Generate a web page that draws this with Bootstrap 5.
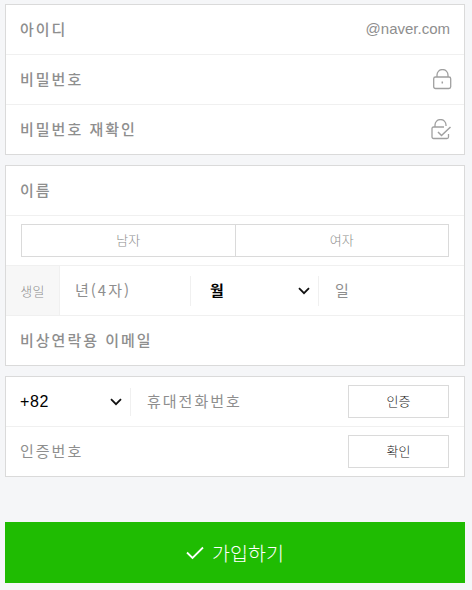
<!DOCTYPE html>
<html lang="ko">
<head>
<meta charset="utf-8">
<title>가입</title>
<link rel="stylesheet" href="https://cdn.jsdelivr.net/npm/bootstrap@5.3.0/dist/css/bootstrap.min.css">
<style>
body{background:#f5f6f8;font-family:"Noto Sans CJK KR","Noto Sans",sans-serif;color:#999;padding:4px 7px 0 5px;height:590px;overflow:hidden}
.boxy{border:1px solid #dadada;border-radius:0;background:#fff;margin-bottom:10px}
.rowy{height:50px;border-bottom:1px solid #f0f0f0;padding:0 14px;font-size:15px;font-weight:500;letter-spacing:2px;color:#8e8e8e}
.rowy:last-child{border-bottom:0;height:49px}
.ico{margin-right:-2px}
.suffix{font-family:"Liberation Sans",sans-serif;font-weight:400;font-size:15px;letter-spacing:0;color:#8e8e8e}
.genderwrap{padding:8px 15px 0 15px;height:50px;border-bottom:1px solid #f0f0f0}
.seg{flex:1 1 0;height:33px;border:1px solid #dadada;font-size:13px;color:#8e8e8e;font-weight:300;padding-bottom:2px}
.seg+.seg{border-left:0}
.birthrow{height:50px;border-bottom:1px solid #f0f0f0}
.birthlabel{width:54px;background:#f7f7f7;border-right:1px solid #f0f0f0;font-size:13px;color:#8e8e8e;font-weight:300;letter-spacing:.4px}
.cell{height:30px;font-size:15px;color:#8e8e8e;letter-spacing:2px;font-weight:400}
.cellyear{width:130px;padding-left:15px}
.cellmonth{width:129px;padding:0 8px 0 19px;border-left:1px solid #f0f0f0;border-right:1px solid #f0f0f0;color:#000;font-weight:700}
.cellday{padding-left:16px}
.code{width:111px;height:28px;border-right:1px solid #f0f0f0;color:#000;font-family:"Liberation Sans",sans-serif;font-size:16px;font-weight:400;letter-spacing:.6px;padding-right:8px}
.telph{padding-left:16px;font-weight:400;letter-spacing:2px}
.smallbtn{width:101px;height:33px;border:1px solid #dadada;border-radius:0;background:#fff;color:#222;font-size:13px;padding:0 0 2px;font-weight:300;margin-right:1px;letter-spacing:0}
.submitbtn{display:flex;width:460px;height:61px;margin-top:45px;background:#1fbc02;border:0;border-radius:0;color:#fff;font-size:19.5px;font-weight:300}
.submitbtn:hover{background:#1fbc02;color:#fff}
</style>
</head>
<body>
<div class="boxy">
  <div class="rowy d-flex align-items-center justify-content-between"><span>아이디</span><span class="suffix">@naver.com</span></div>
  <div class="rowy d-flex align-items-center justify-content-between"><span>비밀번호</span>
    <svg class="ico" width="19" height="21" viewBox="0 0 19 21" fill="none" stroke="#a0a0a0" stroke-width="1.3"><rect x=".7" y="8" width="17" height="11.500" rx="1.800"/><path d="M4 8V6a5.500 5.500 0 0 1 11 0v2"/><path d="M9.300 12.500v2" stroke-width="1.500"/></svg>
  </div>
  <div class="rowy d-flex align-items-center justify-content-between"><span>비밀번호 재확인</span>
    <svg class="ico" width="21" height="21" viewBox="0 0 21 21" fill="none" stroke="#a0a0a0" stroke-width="1.3"><path d="M17.500 15v3a1.500 1.500 0 0 1-1.500 1.500H2.500A1.500 1.500 0 0 1 1 18V9.500A1.500 1.500 0 0 1 2.500 8H13"/><path d="M4 8V6a5.500 5.500 0 0 1 11 0v1"/><path d="M7 13l3.500 3.500L19.500 8" stroke-width="1.500"/></svg>
  </div>
</div>
<div class="boxy">
  <div class="rowy d-flex align-items-center"><span>이름</span></div>
  <div class="genderwrap d-flex">
    <div class="seg d-flex align-items-center justify-content-center">남자</div>
    <div class="seg d-flex align-items-center justify-content-center">여자</div>
  </div>
  <div class="birthrow d-flex align-items-center">
    <div class="birthlabel h-100 d-flex align-items-center justify-content-center">생일</div>
    <div class="cell cellyear d-flex align-items-center">년(4자)</div>
    <div class="cell cellmonth d-flex align-items-center justify-content-between"><span>월</span>
      <svg width="12" height="8" viewBox="0 0 12 8" fill="none" stroke="#111" stroke-width="1.800"><path d="M1 1.200l5 5 5-5"/></svg>
    </div>
    <div class="cell cellday d-flex align-items-center">일</div>
  </div>
  <div class="rowy d-flex align-items-center"><span>비상연락용 이메일</span></div>
</div>
<div class="boxy">
  <div class="rowy d-flex align-items-center justify-content-between">
    <div class="d-flex align-items-center">
      <div class="code d-flex align-items-center justify-content-between"><span>+82</span>
        <svg width="12" height="8" viewBox="0 0 12 8" fill="none" stroke="#111" stroke-width="1.800"><path d="M1 1.200l5 5 5-5"/></svg>
      </div>
      <span class="telph">휴대전화번호</span>
    </div>
    <button type="button" class="btn smallbtn">인증</button>
  </div>
  <div class="rowy d-flex align-items-center justify-content-between">
    <span class="fw-normal">인증번호</span>
    <button type="button" class="btn smallbtn">확인</button>
  </div>
</div>
<button type="button" class="btn submitbtn align-items-center justify-content-center gap-2">
  <svg width="18" height="14" viewBox="0 0 18 14" fill="none" stroke="#fff" stroke-width="1.800"><path d="M1 6.500l5.500 5.500L17 1.500"/></svg>
  <span>가입하기</span>
</button>
<script src="https://cdn.jsdelivr.net/npm/bootstrap@5.3.0/dist/js/bootstrap.bundle.min.js"></script>
</body>
</html>
